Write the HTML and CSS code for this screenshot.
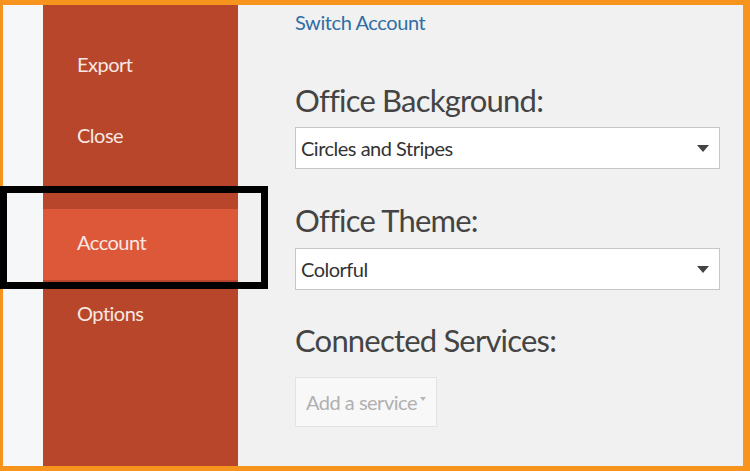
FILE: index.html
```html
<!DOCTYPE html>
<html lang="en">
<head>
    <meta charset="UTF-8">
    <title>Account - Backstage</title>
    <link rel="stylesheet" href="styles.css">
</head>
<body>
    <div class="frame">
        <div class="gutter"></div>

        <nav class="sidebar">
            <div class="nav-item">Export</div>
            <div class="nav-item">Close</div>
            <div class="nav-spacer"></div>
            <div class="nav-item active">Account</div>
            <div class="nav-item">Options</div>
        </nav>

        <div class="content">
            <a class="link" href="#">Switch Account</a>

            <h2 class="section-title background">Office Background:</h2>
            <div class="dropdown">
                <span>Circles and Stripes</span>
                <span class="arrow"></span>
            </div>

            <h2 class="section-title theme">Office Theme:</h2>
            <div class="dropdown">
                <span>Colorful</span>
                <span class="arrow"></span>
            </div>

            <h2 class="section-title services">Connected Services:</h2>
            <div class="service-btn">Add a service <span class="caret"></span></div>
        </div>

        <div class="highlight-box"></div>
    </div>
</body>
</html>
```

FILE: styles.css
```css
html, body {
    margin: 0;
    padding: 0;
}

body {
    font-family: Lato, "Open Sans", sans-serif;
    overflow: hidden;
}

.frame {
    position: relative;
    width: 750px;
    height: 471px;
    box-sizing: border-box;
    border-style: solid;
    border-color: #f7941d;
    border-width: 5px 7px 5px 3px;
    display: flex;
}

.gutter {
    width: 40px;
    background: #f6f7f9;
}

.sidebar {
    width: 195px;
    background: #b7462a;
    padding-top: 26px;
    color: #f8e8e3;
}

.nav-item {
    height: 71px;
    line-height: 67px;
    padding-left: 34px;
    font-size: 20px;
    letter-spacing: -0.5px;
}

.nav-item.active {
    background: #dd5839;
}

.nav-spacer {
    height: 36px;
}

.content {
    flex: 1;
    background: #f1f1f1;
    padding-left: 57px;
    padding-top: 3px;
}

.link {
    display: block;
    color: #2f6da6;
    font-size: 20px;
    line-height: 28px;
    letter-spacing: -0.4px;
    text-decoration: none;
}

.section-title {
    margin: 0;
    font-weight: normal;
    color: #444;
    font-size: 31px;
    line-height: 40px;
    letter-spacing: -0.8px;
}

.section-title.background {
    margin-top: 44px;
    margin-bottom: 7px;
}

.section-title.theme {
    margin-top: 31px;
    margin-bottom: 8px;
}

.section-title.services {
    margin-top: 30px;
    margin-bottom: 17px;
}

.dropdown {
    width: 425px;
    height: 42px;
    box-sizing: border-box;
    background: #fff;
    border: 1px solid #c6c6c6;
    display: flex;
    align-items: center;
    justify-content: space-between;
    padding: 0 10px 0 5px;
    font-size: 20px;
    letter-spacing: -0.5px;
    color: #333;
}

.arrow {
    width: 0;
    height: 0;
    border-left: 6px solid transparent;
    border-right: 6px solid transparent;
    border-top: 7px solid #444;
}

.service-btn {
    display: inline-flex;
    align-items: center;
    gap: 3px;
    height: 50px;
    box-sizing: border-box;
    padding: 0 10px;
    background: #f8f8f8;
    border: 1px solid #e3e3e3;
    color: #b0b0b0;
    font-size: 20px;
    letter-spacing: -0.5px;
}

.caret {
    width: 0;
    height: 0;
    border-left: 3px solid transparent;
    border-right: 3px solid transparent;
    border-top: 4px solid #b8b8b8;
    margin-bottom: 6px;
}

.highlight-box {
    position: absolute;
    left: -3px;
    top: 181px;
    width: 268px;
    height: 103px;
    box-sizing: border-box;
    border: 7px solid #000;
}
```
